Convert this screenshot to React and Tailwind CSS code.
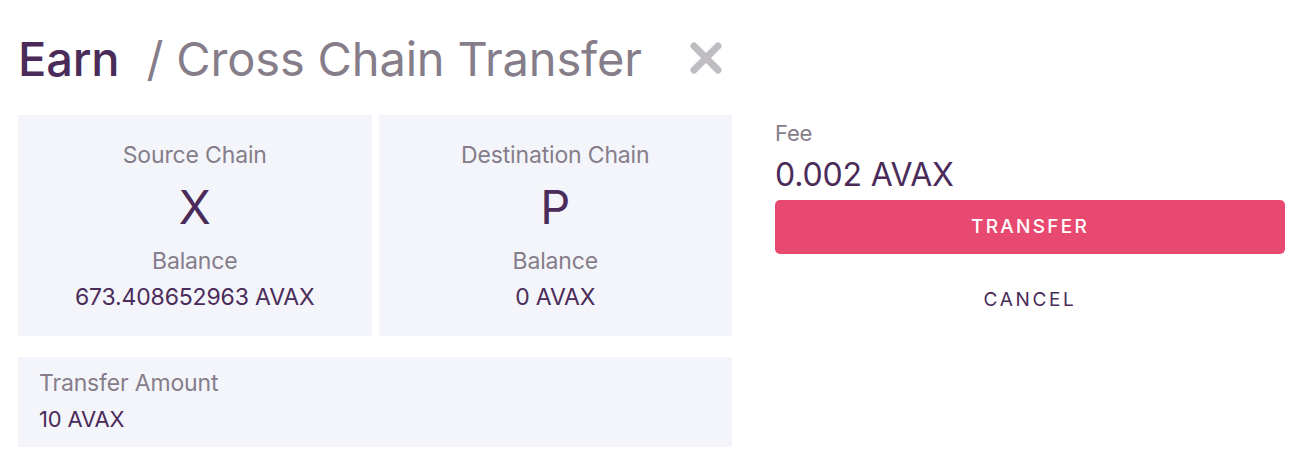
import React from 'react';

const ChainCard = ({ title, chain, balance }) => (
  <div className="flex h-[221px] flex-1 flex-col items-center bg-[#f4f5fa] pt-[26px]">
    <p className="text-[23px] leading-[28px] text-[#857d8a]">{title}</p>
    <p className="mt-[13px] text-[47px] leading-[50px] text-[#4a2b59]">{chain}</p>
    <p className="mt-[15px] text-[23px] leading-[28px] text-[#857d8a]">Balance</p>
    <p className="mt-[8px] text-[23px] leading-[28px] text-[#4a2b59]">{balance}</p>
  </div>
);

const App = () => {
  return (
    <div className="h-[468px] w-[1306px] bg-white font-['Inter',sans-serif] tracking-[-0.01em]">
      <div className="flex items-center pl-[18px] pt-[30px]">
        <h1 className="text-[47px] font-medium leading-[58px] text-[#4a2b59]">Earn</h1>
        <span className="ml-[27px] text-[47px] leading-[58px] text-[#857d8a]">/ Cross Chain Transfer</span>
        <button className="ml-[46px] mt-[-2px]" aria-label="close">
          <svg width="36" height="36" viewBox="0 0 36 36">
            <path d="M6 6 L30 30 M30 6 L6 30" stroke="#bfbcc2" strokeWidth="7" strokeLinecap="round" fill="none" />
          </svg>
        </button>
      </div>

      <div className="mt-[27px] flex gap-[43px] pl-[18px]">
        {/* left column */}
        <div className="flex w-[714px] flex-col gap-[21px]">
          <div className="flex gap-[7px]">
            <ChainCard title="Source Chain" chain="X" balance="673.408652963 AVAX" />
            <ChainCard title="Destination Chain" chain="P" balance="0 AVAX" />
          </div>
          <div className="flex h-[90px] flex-col bg-[#f4f5fa] pl-[21px] pt-[12px]">
            <p className="text-[23px] leading-[28px] text-[#857d8a]">Transfer Amount</p>
            <p className="mt-[8px] text-[22px] leading-[28px] text-[#4a2b59]">10 AVAX</p>
          </div>
        </div>

        {/* right column */}
        <div className="flex w-[510px] flex-col pt-[5px]">
          <p className="text-[22px] leading-[26px] text-[#857d8a]">Fee</p>
          <p className="mt-[10px] text-[32px] leading-[38px] text-[#4a2b59]">0.002 AVAX</p>
          <button className="mt-[6px] h-[54px] w-full rounded-[5px] bg-[#e84970] text-[19px] font-medium tracking-[0.12em] text-white">
            TRANSFER
          </button>
          <button className="mt-[25px] h-[42px] w-full text-[19px] tracking-[0.14em] text-[#4a2b59]">
            CANCEL
          </button>
        </div>
      </div>
    </div>
  );
};

export default App;
